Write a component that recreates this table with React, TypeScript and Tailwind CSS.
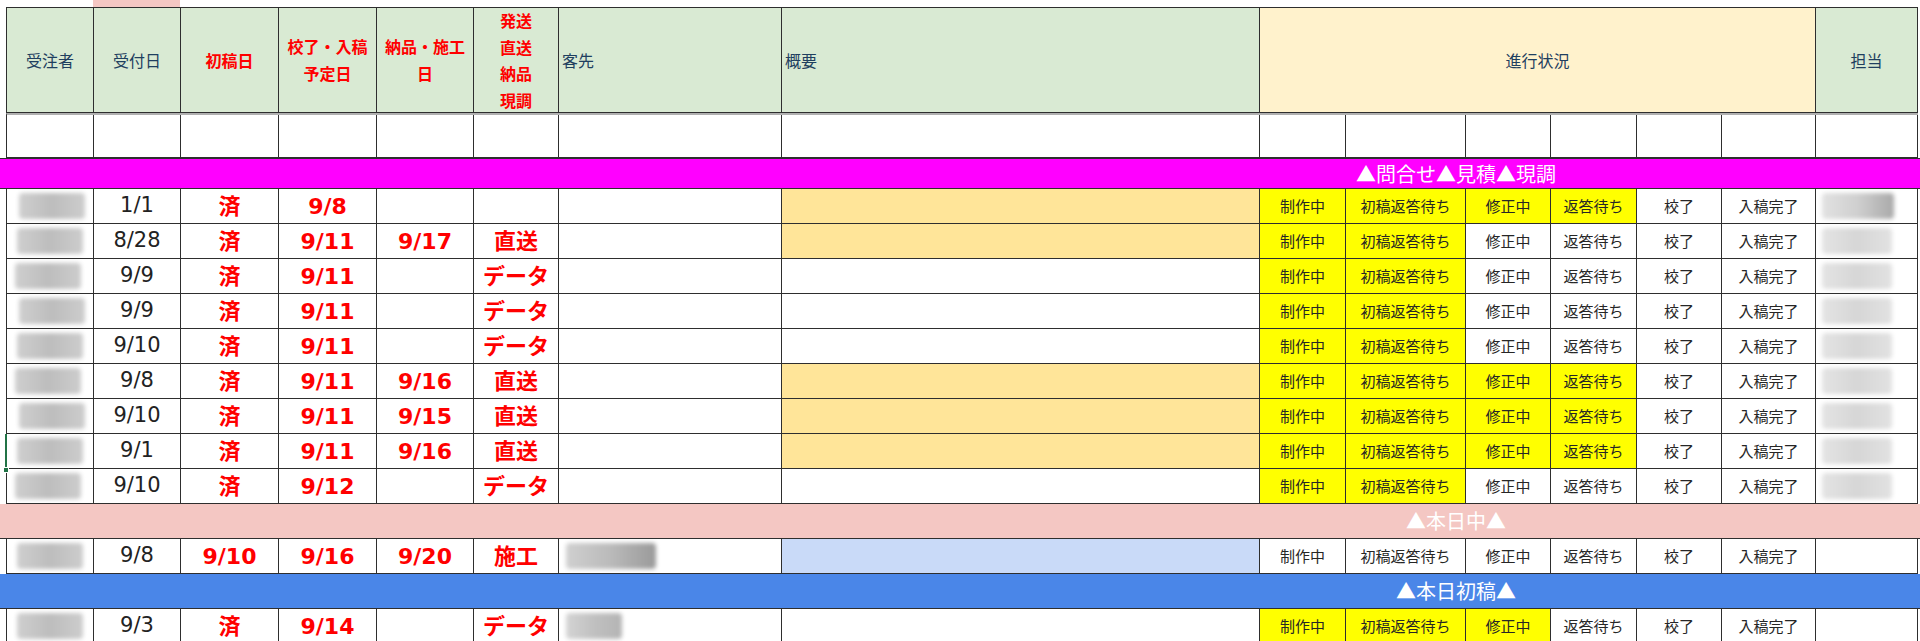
import React from "react";

const COLS =
  "grid grid-cols-[87px_87px_98px_98px_97px_85px_223px_478px_86px_120px_85px_86px_85px_94px_102px]";

const FONT = "font-['DejaVu_Sans','Noto_Sans_CJK_JP',sans-serif]";
const JP = "font-['Noto_Sans_CJK_JP',sans-serif]";

const STATUSES = ["制作中", "初稿返答待ち", "修正中", "返答待ち", "校了", "入稿完了"];

type Row = {
  date: string;
  first: string;
  due: string;
  deliver?: string;
  ship?: string;
  client?: string;
  summary: "orange" | "white" | "blue";
  yellow: number;
  staff: "dark" | "light" | "none";
};

const GROUP_A: Row[] = [
  { date: "1/1", first: "済", due: "9/8", summary: "orange", yellow: 4, staff: "dark" },
  { date: "8/28", first: "済", due: "9/11", deliver: "9/17", ship: "直送", summary: "orange", yellow: 2, staff: "light" },
  { date: "9/9", first: "済", due: "9/11", ship: "データ", summary: "white", yellow: 2, staff: "light" },
  { date: "9/9", first: "済", due: "9/11", ship: "データ", summary: "white", yellow: 2, staff: "light" },
  { date: "9/10", first: "済", due: "9/11", ship: "データ", summary: "white", yellow: 2, staff: "light" },
  { date: "9/8", first: "済", due: "9/11", deliver: "9/16", ship: "直送", summary: "orange", yellow: 4, staff: "light" },
  { date: "9/10", first: "済", due: "9/11", deliver: "9/15", ship: "直送", summary: "orange", yellow: 4, staff: "light" },
  { date: "9/1", first: "済", due: "9/11", deliver: "9/16", ship: "直送", summary: "orange", yellow: 4, staff: "light" },
  { date: "9/10", first: "済", due: "9/12", ship: "データ", summary: "white", yellow: 2, staff: "light" },
];

const GROUP_B: Row[] = [
  { date: "9/8", first: "9/10", due: "9/16", deliver: "9/20", ship: "施工", client: "wide", summary: "blue", yellow: 0, staff: "none" },
];

const GROUP_C: Row[] = [
  { date: "9/3", first: "済", due: "9/14", ship: "データ", client: "short", summary: "white", yellow: 3, staff: "none" },
];

const cell = "border-r border-b border-[#2e2e2e] flex items-center justify-center overflow-hidden";
const red = "text-[#ff0000] font-bold text-[22px]";

function Blur({ className }: { className: string }) {
  return <div className={`h-[26px] rounded-sm blur-[2px] ${className}`} />;
}

function Header() {
  return (
    <>
      <div className="flex h-[7px]">
        <div className="ml-[93px] w-[87px] bg-[#f4c7c3]" />
      </div>
      <div className="flex">
        <div className="w-[6px] shrink-0" />
        <div className={`${COLS} h-[106px] border-l border-t border-[#2e2e2e] text-[16px] ${JP}`}>
          <div className={`${cell} bg-[#d9ead3] text-[#1f3f5f]`}>受注者</div>
          <div className={`${cell} bg-[#d9ead3] text-[#1f3f5f]`}>受付日</div>
          <div className={`${cell} bg-[#d9ead3] font-bold text-[#ff0000]`}>初稿日</div>
          <div className={`${cell} bg-[#d9ead3] text-center font-bold leading-[27px] text-[#ff0000]`}>
            校了・入稿
            <br />
            予定日
          </div>
          <div className={`${cell} bg-[#d9ead3] text-center font-bold leading-[27px] text-[#ff0000]`}>
            納品・施工
            <br />
            日
          </div>
          <div className={`${cell} bg-[#d9ead3] text-center font-bold leading-[26.5px] text-[#ff0000]`}>
            発送
            <br />
            直送
            <br />
            納品
            <br />
            現調
          </div>
          <div className={`${cell} !justify-start bg-[#d9ead3] pl-[3px] text-[#1f3f5f]`}>客先</div>
          <div className={`${cell} !justify-start bg-[#d9ead3] pl-[3px] text-[#1f3f5f]`}>概要</div>
          <div className={`${cell} col-span-6 bg-[#fff2cc] text-[#1f3f5f]`}>進行状況</div>
          <div className={`${cell} bg-[#d9ead3] text-[#1f3f5f]`}>担当</div>
        </div>
      </div>
      <div className="flex">
        <div className="w-[6px] shrink-0" />
        <div className={`${COLS} h-[45px] border-l border-t-2 border-t-[#b0b0b0] border-l-[#2e2e2e]`}>
          {Array.from({ length: 15 }).map((_, i) => (
            <div key={i} className={cell} />
          ))}
        </div>
      </div>
    </>
  );
}

function Band({ label, color, height }: { label: string; color: string; height: string }) {
  return (
    <div className={`flex items-center border-b border-[#2e2e2e] ${height} ${color}`}>
      <div className="w-[1259px] shrink-0" />
      <div className={`w-[394px] text-center text-[20px] text-white ${JP}`}>{label}</div>
    </div>
  );
}

function DataRow({ row, index }: { row: Row; index: number }) {
  const summaryBg =
    row.summary === "orange" ? "bg-[#ffe599]" : row.summary === "blue" ? "bg-[#c9daf8]" : "bg-white";
  const nameOffset = index % 3 === 0 ? "ml-[4px]" : index % 3 === 1 ? "ml-0" : "-ml-[4px]";
  return (
    <div className="flex">
      <div className="w-[6px] shrink-0" />
      <div className={`${COLS} h-[35px] border-l border-[#2e2e2e] ${FONT}`}>
        <div className={cell}>
          <Blur className={`w-[66px] bg-gradient-to-r from-[#cfcfcf] via-[#bdbdbd] to-[#cdcdcd] ${nameOffset}`} />
        </div>
        <div className={`${cell} text-[21px] text-[#222]`}>{row.date}</div>
        <div className={`${cell} ${red}`}>{row.first}</div>
        <div className={`${cell} ${red}`}>{row.due}</div>
        <div className={`${cell} ${red}`}>{row.deliver}</div>
        <div className={`${cell} ${red}`}>{row.ship}</div>
        <div className={`${cell} !justify-start pl-[7px]`}>
          {row.client === "wide" && (
            <Blur className="w-[90px] bg-gradient-to-r from-[#d0d0d0] via-[#bababa] to-[#9a9a9a]" />
          )}
          {row.client === "short" && (
            <Blur className="w-[56px] bg-gradient-to-r from-[#d4d4d4] via-[#c0c0c0] to-[#b4b4b4]" />
          )}
        </div>
        <div className={`${cell} ${summaryBg}`} />
        {STATUSES.map((s, i) => (
          <div
            key={s}
            className={`${cell} text-[15px] text-[#262626] ${JP} ${i < row.yellow ? "bg-[#ffff00]" : "bg-white"}`}
          >
            {s}
          </div>
        ))}
        <div className={`${cell} !justify-start pl-[6px]`}>
          {row.staff === "dark" && (
            <Blur className="w-[72px] bg-gradient-to-r from-[#e2e2e2] via-[#cfcfcf] to-[#a9a9a9]" />
          )}
          {row.staff === "light" && (
            <Blur className="w-[70px] bg-gradient-to-r from-[#e4e4e4] via-[#d6d6d6] to-[#e2e2e2]" />
          )}
        </div>
      </div>
    </div>
  );
}

export default function App() {
  return (
    <div className="relative h-[641px] w-[1920px] overflow-hidden bg-white">
      <Header />
      <Band label="▲問合せ▲見積▲現調" color="bg-[#ff00ff] border-t border-t-[#2e2e2e]" height="h-[31px]" />
      {GROUP_A.map((row, i) => (
        <DataRow key={i} row={row} index={i} />
      ))}
      <Band label="▲本日中▲" color="bg-[#f4c7c3]" height="h-[35px]" />
      {GROUP_B.map((row, i) => (
        <DataRow key={i} row={row} index={i + 1} />
      ))}
      <Band label="▲本日初稿▲" color="bg-[#4a86e8]" height="h-[35px]" />
      {GROUP_C.map((row, i) => (
        <DataRow key={i} row={row} index={i + 1} />
      ))}
      <div className="absolute left-[5px] top-[434px] h-[36px] w-[2px] bg-[#217346]" />
      <div className="absolute left-[3px] top-[467px] h-[6px] w-[6px] border border-white bg-[#217346]" />
    </div>
  );
}
